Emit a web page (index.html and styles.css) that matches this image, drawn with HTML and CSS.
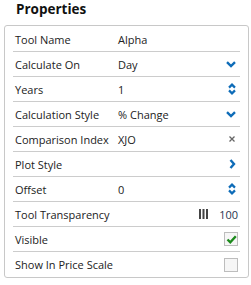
FILE: index.html
```html
<!DOCTYPE html>
<html lang="en">
<head>
    <meta charset="UTF-8">
    <title>Properties</title>
    <link rel="stylesheet" href="styles.css">
</head>
<body>
    <h2 class="title">Properties</h2>
    <div class="panel">
        <div class="row">
            <span class="label">Tool Name</span>
            <span class="value">Alpha</span>
        </div>
        <div class="row">
            <span class="label">Calculate On</span>
            <span class="value">Day</span>
            <svg class="icon" width="10" height="7" viewBox="0 0 10 7"><path d="M1 1.2 L5 5 L9 1.2" fill="none" stroke="#0e6cb8" stroke-width="2.4"/></svg>
        </div>
        <div class="row">
            <span class="label">Years</span>
            <span class="value">1</span>
            <svg class="icon" width="8" height="12" viewBox="0 0 8 12"><path d="M1 4.6 L4 1.6 L7 4.6 M1 7.4 L4 10.4 L7 7.4" fill="none" stroke="#0e6cb8" stroke-width="2.2"/></svg>
        </div>
        <div class="row">
            <span class="label">Calculation Style</span>
            <span class="value">% Change</span>
            <svg class="icon" width="10" height="7" viewBox="0 0 10 7"><path d="M1 1.2 L5 5 L9 1.2" fill="none" stroke="#0e6cb8" stroke-width="2.4"/></svg>
        </div>
        <div class="row">
            <span class="label">Comparison Index</span>
            <span class="value">XJO</span>
            <svg class="icon" width="8" height="8" viewBox="0 0 8 8"><path d="M1.5 1.5 L6.5 6.5 M6.5 1.5 L1.5 6.5" fill="none" stroke="#666" stroke-width="1.3"/></svg>
        </div>
        <div class="row">
            <span class="label">Plot Style</span>
            <span class="value"></span>
            <svg class="icon" width="7" height="10" viewBox="0 0 7 10"><path d="M1.5 1 L5 5 L1.5 9" fill="none" stroke="#0e6cb8" stroke-width="2.4"/></svg>
        </div>
        <div class="row">
            <span class="label">Offset</span>
            <span class="value">0</span>
            <svg class="icon" width="8" height="12" viewBox="0 0 8 12"><path d="M1 4.6 L4 1.6 L7 4.6 M1 7.4 L4 10.4 L7 7.4" fill="none" stroke="#0e6cb8" stroke-width="2.2"/></svg>
        </div>
        <div class="row">
            <span class="label">Tool Transparency</span>
            <span class="value"></span>
            <span class="slider">
                <svg width="9" height="10" viewBox="0 0 9 10"><path d="M1 0 V10 M4.5 0 V10 M8 0 V10" stroke="#444" stroke-width="2"/></svg>
                <span class="amount">100</span>
            </span>
        </div>
        <div class="row">
            <span class="label">Visible</span>
            <span class="value"></span>
            <span class="check">
                <svg width="11" height="11" viewBox="0 0 11 11"><path d="M1.5 5.5 L4.3 8.3 L9.8 2.3" fill="none" stroke="#1c8a1c" stroke-width="2.4"/></svg>
            </span>
        </div>
        <div class="row">
            <span class="label">Show In Price Scale</span>
            <span class="value"></span>
            <span class="check"></span>
        </div>
    </div>
</body>
</html>
```

FILE: styles.css
```css
body {
    margin: 0;
    font-family: "Open Sans", sans-serif;
    color: #222;
    background: #ffffff;
}
.title {
    margin: 0;
    padding: 0 0 0 16px;
    height: 25px;
    font-size: 13.5px;
    font-weight: 700;
    line-height: 19px;
    color: #111;
}
.panel {
    margin-left: 4px;
    width: 245px;
    box-sizing: border-box;
    border: 1px solid #c8c8c8;
    border-radius: 3px;
    padding: 1px 8px 0;
}
.row {
    display: flex;
    align-items: center;
    box-sizing: border-box;
    height: 25px;
    border-bottom: 1px solid #cccccc;
    padding: 0 2px 0 2px;
    font-size: 11px;
    white-space: nowrap;
}
.row:last-child {
    border-bottom: none;
}
.label {
    width: 103px;
    flex-shrink: 0;
}
.value {
    flex: 1;
}
.icon {
    display: block;
    margin-right: 2px;
}
.slider {
    display: flex;
    align-items: center;
    gap: 11px;
}
.slider svg {
    display: block;
}
.amount {
    color: #2a3550;
}
.check {
    width: 12px;
    height: 12px;
    border: 1px solid #bdbdbd;
    background: #f6f6f6;
    display: flex;
    align-items: center;
    justify-content: center;
}
.check svg {
    display: block;
}
```
